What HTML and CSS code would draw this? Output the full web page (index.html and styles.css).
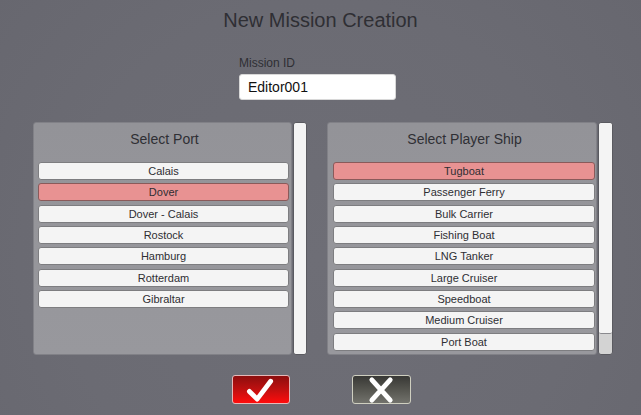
FILE: index.html
```html
<!DOCTYPE html>
<html>
<head>
<meta charset="utf-8">
<title>New Mission Creation</title>
<link rel="stylesheet" href="styles.css">
</head>
<body>
<div class="screen">
  <h1 class="title">New Mission Creation</h1>
  <div class="field">
    <label class="field-label">Mission ID</label>
    <div class="field-input">Editor001</div>
  </div>
  <div class="lists">
    <div class="list-block list-port">
      <div class="panel">
        <div class="panel-title">Select Port</div>
        <div class="items">
          <div class="item">Calais</div>
          <div class="item selected">Dover</div>
          <div class="item">Dover - Calais</div>
          <div class="item">Rostock</div>
          <div class="item">Hamburg</div>
          <div class="item">Rotterdam</div>
          <div class="item">Gibraltar</div>
        </div>
      </div>
      <div class="scrollbar"><div class="thumb full"></div></div>
    </div>
    <div class="list-block list-ship">
      <div class="panel">
        <div class="panel-title">Select Player Ship</div>
        <div class="items">
          <div class="item selected">Tugboat</div>
          <div class="item">Passenger Ferry</div>
          <div class="item">Bulk Carrier</div>
          <div class="item">Fishing Boat</div>
          <div class="item">LNG Tanker</div>
          <div class="item">Large Cruiser</div>
          <div class="item">Speedboat</div>
          <div class="item">Medium Cruiser</div>
          <div class="item">Port Boat</div>
        </div>
      </div>
      <div class="scrollbar"><div class="thumb partial"></div></div>
    </div>
  </div>
  <div class="actions">
    <button class="btn btn-ok" aria-label="Confirm">
      <svg width="58" height="29" viewBox="0 0 58 29"><path d="M17 16.5 L25 24.5 L39 6" fill="none" stroke="#fff" stroke-width="5" stroke-linecap="round" stroke-linejoin="round"/></svg>
    </button>
    <button class="btn btn-cancel" aria-label="Cancel">
      <svg width="59" height="29" viewBox="0 0 59 29"><path d="M19.5 4.5 L38.5 25.5 M38.5 4.5 L19.5 25.5" fill="none" stroke="#fff" stroke-width="5" stroke-linecap="round"/></svg>
    </button>
  </div>
</div>
</body>
</html>
```
FILE: styles.css
```css
html, body {
  margin: 0;
  padding: 0;
}
body {
  width: 641px;
  height: 415px;
  overflow: hidden;
  background: radial-gradient(circle at 321px 260px, #6e6e76 0px, #6b6b73 260px, #67676f 420px);
  font-family: "Liberation Sans", Arial, sans-serif;
  color: #2e2e33;
}
.screen {
  display: flex;
  flex-direction: column;
  height: 415px;
}
.title {
  margin: 9px 0 0 0;
  font-size: 20px;
  line-height: 23px;
  font-weight: normal;
  text-align: center;
  color: #2f2f34;
}
.field {
  margin: 24px 0 0 239px;
  width: 157px;
  display: flex;
  flex-direction: column;
}
.field-label {
  font-size: 12px;
  line-height: 14px;
  color: #2f2f34;
  height: 18px;
}
.field-input {
  box-sizing: border-box;
  height: 26px;
  background: #ffffff;
  border: 1px solid #d8d8d8;
  border-radius: 3px;
  padding: 0 0 0 8px;
  font-size: 14px;
  line-height: 24px;
  color: #111;
}
.lists {
  display: flex;
  gap: 20px;
  margin: 22px 0 0 33px;
  height: 233px;
}
.list-block {
  display: flex;
  gap: 1px;
  height: 233px;
}
.panel {
  box-sizing: border-box;
  height: 233px;
  background: linear-gradient(#939398, #98989d);
  border: 1px solid #818187;
  border-radius: 3px;
  padding-top: 8px;
}
.list-port .panel {
  width: 259px;
  padding-left: 4px;
}
.list-ship .panel {
  width: 270px;
  padding-left: 5px;
}
.panel-title {
  font-size: 14px;
  line-height: 16px;
  text-align: center;
  color: #2f2f34;
}
.items {
  display: flex;
  flex-direction: column;
  gap: 3.33px;
  margin-top: 15px;
}
.list-port .items { width: 251px; }
.list-ship .items { width: 262px; }
.item {
  box-sizing: border-box;
  height: 18px;
  background: #f4f4f4;
  border: 1px solid #7d7d80;
  border-radius: 3px;
  font-size: 11px;
  line-height: 16px;
  text-align: center;
  color: #2e2e33;
}
.item.selected {
  background: #e89292;
  border-color: #8a5a5a;
}
.scrollbar {
  box-sizing: border-box;
  height: 233px;
  background: #d3d3d3;
  border: 1px solid #5a5a60;
  border-radius: 3px;
  overflow: hidden;
  display: flex;
  flex-direction: column;
}
.list-port .scrollbar { width: 14px; }
.list-ship .scrollbar { width: 15px; }
.thumb {
  background: #f4f4f4;
  border-radius: 2px;
}
.thumb.full { height: 100%; }
.thumb.partial {
  height: 210px;
  border-bottom: 1px solid #8a8a8e;
}
.actions {
  display: flex;
  gap: 62px;
  margin: 20px 0 0 232px;
}
.btn {
  box-sizing: border-box;
  height: 29px;
  padding: 0;
  border-radius: 3px;
  display: flex;
  align-items: center;
  justify-content: center;
  cursor: pointer;
}
.btn svg { display: block; }
.btn-ok {
  width: 58px;
  background: linear-gradient(#8c0e0e, #c01010 50%, #ff0c0c);
  border: 1px solid #e6b8b8;
}
.btn-cancel {
  width: 59px;
  background: linear-gradient(#383835, #55554f 50%, #72726c);
  border: 1px solid #cfcfc0;
}
```
